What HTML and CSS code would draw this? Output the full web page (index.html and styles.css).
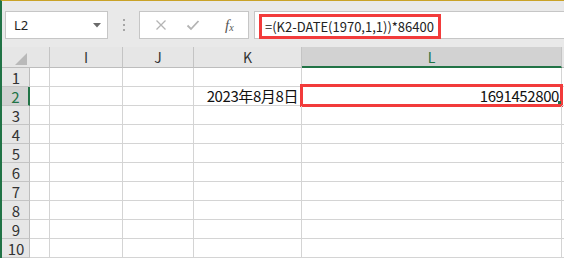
FILE: index.html
```html
<!DOCTYPE html>
<html lang="zh">
<head>
<meta charset="utf-8">
<link rel="stylesheet" href="styles.css">
</head>
<body>
<div class="app">
  <div class="toolbar">
    <div class="namebox">
      <span class="name">L2</span>
      <svg class="caret" width="8" height="5" viewBox="0 0 8 5"><path d="M0 0H8L4 4.5Z" fill="#6a6a6a"/></svg>
    </div>
    <div class="dots"><i></i><i></i><i></i></div>
    <div class="fxbox">
      <svg class="ic" width="12" height="12" viewBox="0 0 12 12"><path d="M1.5 1.5L10.5 10.5M10.5 1.5L1.5 10.5" stroke="#b4b4b4" stroke-width="1.3" fill="none"/></svg>
      <svg class="ic" width="14" height="12" viewBox="0 0 14 12"><path d="M1.5 6.5L5 10L12.5 2" stroke="#b4b4b4" stroke-width="1.8" fill="none"/></svg>
      <span class="fx">f<sub>x</sub></span>
    </div>
    <div class="formula">
      <span class="ftext">=(K2-DATE(1970,1,1))*86400</span>
    </div>
  </div>
  <div class="grid">
    <div class="hd corner"><svg width="12" height="12" viewBox="0 0 12 12"><path d="M12 0V12H0Z" fill="#b9b9b9"/></svg></div>
    <div class="hd col">I</div>
    <div class="hd col">J</div>
    <div class="hd col">K</div>
    <div class="hd col sel">L</div>
    <div class="hd col end"></div>

    <div class="rh">1</div><div class="c"></div><div class="c"></div><div class="c"></div><div class="c"></div><div class="c"></div><div class="c end"></div>
    <div class="rh sel">2</div><div class="c"></div><div class="c"></div><div class="c"></div><div class="c num">2023年8月8日</div><div class="c num active">1691452800</div><div class="c end"></div>
    <div class="rh">3</div><div class="c"></div><div class="c"></div><div class="c"></div><div class="c"></div><div class="c"></div><div class="c end"></div>
    <div class="rh">4</div><div class="c"></div><div class="c"></div><div class="c"></div><div class="c"></div><div class="c"></div><div class="c end"></div>
    <div class="rh">5</div><div class="c"></div><div class="c"></div><div class="c"></div><div class="c"></div><div class="c"></div><div class="c end"></div>
    <div class="rh">6</div><div class="c"></div><div class="c"></div><div class="c"></div><div class="c"></div><div class="c"></div><div class="c end"></div>
    <div class="rh">7</div><div class="c"></div><div class="c"></div><div class="c"></div><div class="c"></div><div class="c"></div><div class="c end"></div>
    <div class="rh">8</div><div class="c"></div><div class="c"></div><div class="c"></div><div class="c"></div><div class="c"></div><div class="c end"></div>
    <div class="rh">9</div><div class="c"></div><div class="c"></div><div class="c"></div><div class="c"></div><div class="c"></div><div class="c end"></div>
    <div class="rh">10</div><div class="c"></div><div class="c"></div><div class="c"></div><div class="c"></div><div class="c"></div><div class="c end"></div>
  </div>
</div>
</body>
</html>
```
FILE: styles.css
```css
* { box-sizing: border-box; }
html, body { margin: 0; padding: 0; }
body {
  width: 564px;
  height: 258px;
  overflow: hidden;
  background: #fff;
  font-family: "Noto Sans CJK SC", "Noto Sans", sans-serif;
}
.app {
  width: 564px;
  height: 258px;
  border-top: 1px solid #c9a227;
  border-left: 2px solid #217346;
  display: flex;
  flex-direction: column;
  overflow: hidden;
}
.toolbar {
  height: 46px;
  flex: none;
  background: #e9e9e9;
  display: flex;
  align-items: flex-start;
  padding-top: 10px;
}
.namebox {
  margin-left: 3px;
  width: 103px;
  height: 28px;
  background: #fff;
  border: 1px solid #c6c6c6;
  display: flex;
  align-items: center;
  justify-content: space-between;
  padding: 0 6px 0 8px;
}
.name {
  font-size: 13px;
  color: #222;
  font-family: "Noto Sans", sans-serif;
}
.caret { margin-top: 1px; }
.dots {
  width: 31px;
  height: 28px;
  display: flex;
  flex-direction: column;
  align-items: center;
  justify-content: center;
  gap: 3px;
}
.dots i {
  display: block;
  width: 2px;
  height: 2px;
  background: #a6a6a6;
}
.fxbox {
  width: 110px;
  height: 28px;
  background: #fff;
  border: 1px solid #c6c6c6;
  display: flex;
  align-items: center;
  padding-left: 15px;
  gap: 0;
}
.fxbox .ic:first-child { margin-right: 19px; }
.fxbox .ic:nth-child(2) { margin-right: 25px; }
.fx {
  font-family: "Liberation Serif", serif;
  font-style: italic;
  font-size: 15px;
  color: #555;
  line-height: 1;
}
.fx sub {
  font-size: 10px;
  vertical-align: -1px;
}
.formula {
  margin-left: 5px;
  flex: 1;
  height: 28px;
  background: #fff;
  border-top: 1px solid #c6c6c6;
  border-left: 1px solid #c6c6c6;
  border-bottom: 1px solid #c6c6c6;
  padding: 1px 0 0 4px;
}
.ftext {
  display: inline-block;
  height: 25px;
  line-height: 19px;
  border: 3px solid #f23b3b;
  padding: 0 4px 0 3px;
  font-family: "Noto Sans CJK SC", sans-serif;
  font-size: 13px;
  color: #222;
  letter-spacing: 0;
}
.grid {
  display: grid;
  grid-template-columns: 28px 20px 73px 71px 108px 260px 2px;
  grid-template-rows: 21px repeat(10, 19px);
}
.hd {
  background: #e6e6e6;
  border-right: 1px solid #c4c4c4;
  border-bottom: 1px solid #bdbdbd;
  display: flex;
  align-items: center;
  justify-content: center;
  font-family: "Noto Sans CJK SC", sans-serif;
  font-size: 14px;
  color: #333;
  line-height: 1;
}
.corner {
  grid-column: span 2;
  justify-content: flex-start;
  align-items: flex-end;
  padding: 0 0 2px 13px;
}
.hd.sel {
  background: #d2d2d2;
  color: #217346;
  border-bottom: 2px solid #217346;
}
.hd.end { border-right: none; }
.rh {
  background: #e6e6e6;
  border-right: 1px solid #bdbdbd;
  border-bottom: 1px solid #c4c4c4;
  display: flex;
  align-items: center;
  justify-content: center;
  font-size: 15px;
  color: #333;
  line-height: 1;
  padding-left: 1px;
}
.rh.sel {
  background: #d2d2d2;
  color: #217346;
  border-right: 2px solid #217346;
}
.c {
  border-right: 1px solid #d4d4d4;
  border-bottom: 1px solid #d4d4d4;
  position: relative;
}
.c.end { border-right: none; }
.num {
  text-align: right;
  font-size: 15px;
  line-height: 18px;
  color: #111;
  padding-right: 3px;
  letter-spacing: -0.4px;
  white-space: nowrap;
}
.active { padding-right: 2px; }
.active::after {
  content: "";
  position: absolute;
  left: -2px;
  top: -3px;
  right: -2px;
  bottom: -2px;
  border: 3px solid #f23b3b;
}
.active::before {
  content: "";
  position: absolute;
  right: 0;
  bottom: 1px;
  width: 3px;
  height: 3px;
  background: #217346;
  z-index: 2;
}
```
